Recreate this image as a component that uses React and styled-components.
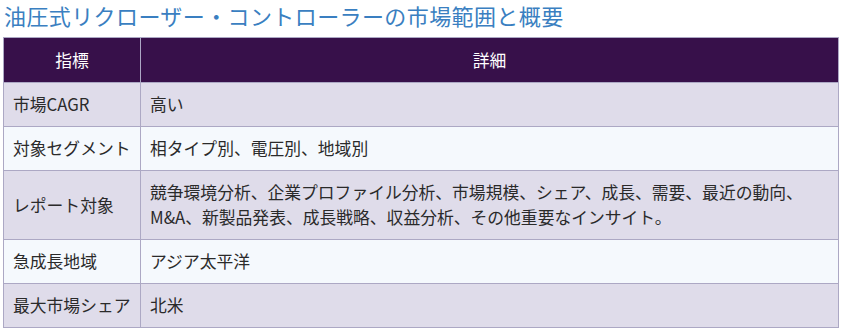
import React from "react";
import styled, { createGlobalStyle } from "styled-components";

const GlobalStyle = createGlobalStyle`
  body {
    margin: 0;
    background: #ffffff;
    font-family: "Noto Sans CJK JP", "Noto Sans", sans-serif;
  }
`;

const rows = [
  { label: "市場CAGR", value: "高い" },
  { label: "対象セグメント", value: "相タイプ別、電圧別、地域別" },
  {
    label: "レポート対象",
    value:
      "競争環境分析、企業プロファイル分析、市場規模、シェア、成長、需要、最近の動向、M&A、新製品発表、成長戦略、収益分析、その他重要なインサイト。",
  },
  { label: "急成長地域", value: "アジア太平洋" },
  { label: "最大市場シェア", value: "北米" },
];

export default function App() {
  return (
    <>
      <GlobalStyle />
      <Page>
        <Title>油圧式リクローザー・コントローラーの市場範囲と概要</Title>
        <Table>
          <thead>
            <tr>
              <HeadCell $first>指標</HeadCell>
              <HeadCell>詳細</HeadCell>
            </tr>
          </thead>
          <tbody>
            {rows.map((row, i) => (
              <Row key={row.label} $odd={i % 2 === 0}>
                <Cell $first>{row.label}</Cell>
                <Cell>{row.value}</Cell>
              </Row>
            ))}
          </tbody>
        </Table>
      </Page>
    </>
  );
}

const Page = styled.div`
  padding: 0 5px 0 3px;
`;

const Title = styled.h2`
  margin: 0 0 7px 1px;
  font-size: 22px;
  font-weight: 400;
  line-height: 30px;
  color: #3a7fc1;
  letter-spacing: 0.4px;
`;

const Table = styled.table`
  width: 836px;
  border-collapse: collapse;
  border: 1px solid #aca8c4;
  font-size: 16.8px;
  color: #2a2a2a;
`;

const HeadCell = styled.th`
  width: ${(p) => (p.$first ? "118px" : "auto")};
  height: 44px;
  padding: 0 9px;
  background: #37104a;
  color: #ffffff;
  font-weight: 400;
  text-align: center;
  border: 1px solid #aca8c4;
  line-height: 25px;
`;

const Row = styled.tr`
  background: ${(p) => (p.$odd ? "#dfdcea" : "#f5f9fd")};
`;

const Cell = styled.td`
  padding: 9px 9px;
  line-height: 25px;
  text-align: left;
  vertical-align: middle;
  border: 1px solid #aca8c4;
  white-space: ${(p) => (p.$first ? "nowrap" : "normal")};
`;
